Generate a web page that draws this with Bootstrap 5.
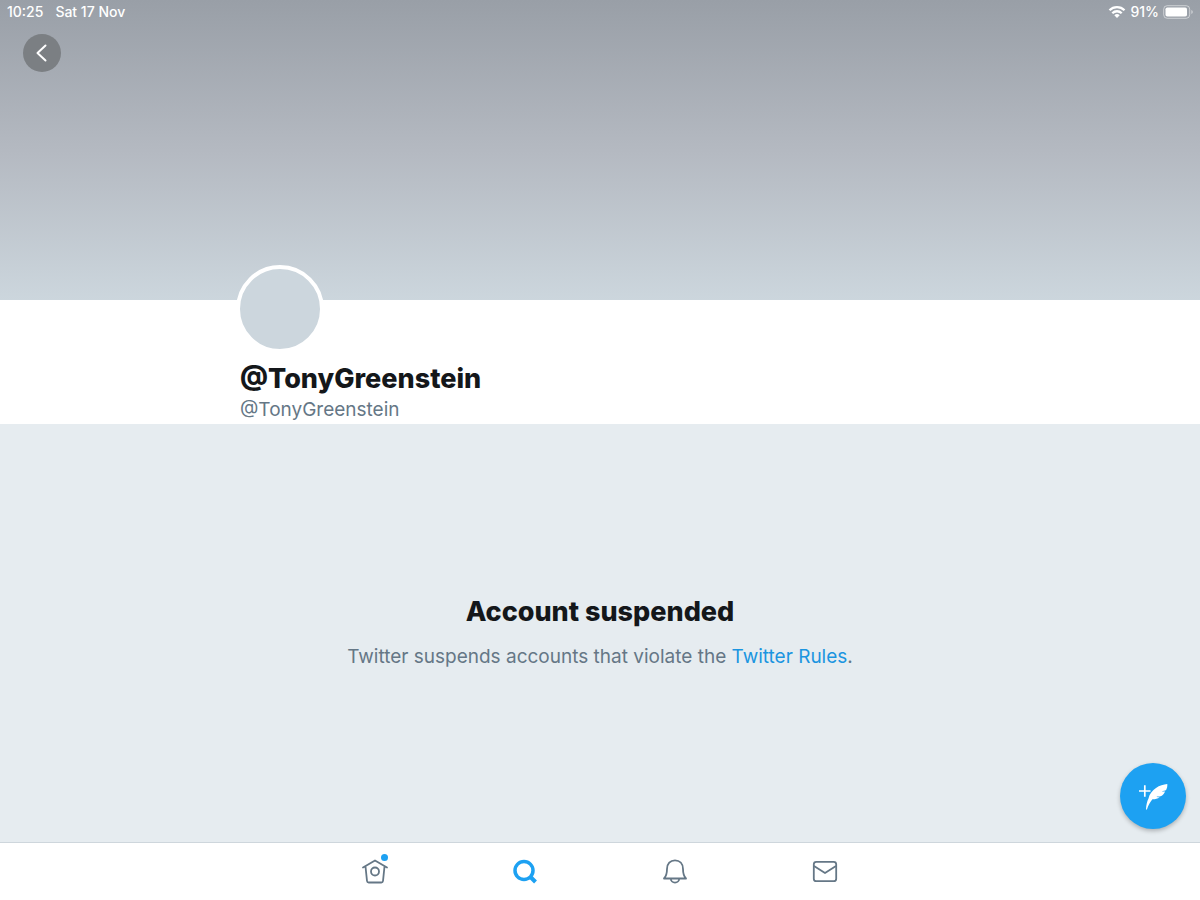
<!DOCTYPE html>
<html lang="en">
<head>
<meta charset="utf-8">
<meta name="viewport" content="width=device-width, initial-scale=1">
<title>@TonyGreenstein</title>
<link href="https://cdn.jsdelivr.net/npm/bootstrap@5.3.0/dist/css/bootstrap.min.css" rel="stylesheet">
<style>
  body { font-family: Inter, "Liberation Sans", sans-serif; color: #14171a; background: #e6ecf0; }
  .banner { height: 300px; background: linear-gradient(#999fa7, #b4b9c1 50%, #ccd6dd); }
  .status { font-size: 14px; line-height: 24px; font-weight: 500; padding: 0 7px; }
  .back { width: 38px; height: 38px; margin: 10px 0 0 23px; background: #7b7f83; }
  .profile { width: 60%; }
  .avatar { width: 88px; height: 88px; margin: -35px 0 0 -4px; border: 4px solid #fff; background: #ccd6dd; }
  .title { font-size: 27px; line-height: 34px; font-weight: 800; }
  .sub { font-size: 19px; line-height: 24px; color: #657786; }
  .profile .title { margin-top: 9px; }
  .profile .sub { margin-top: 2px; padding-bottom: 2px; }
  .sub a { color: #1b95e0; }
  .notice { padding-bottom: 2px; }
  .compose { width: 66px; height: 66px; right: 14px; bottom: 13px; background: #1da1f2; box-shadow: 0 2px 4px rgba(0,0,0,.25); }
  .tabs { height: 58px; border-top: 1px solid #ced6dc; }
  .tabs-inner { width: 50%; padding-bottom: 2px; }
  .tab { color: #657786; }
  .tab.active { color: #1da1f2; }
  svg { display: block; }
</style>
</head>
<body class="d-flex flex-column min-vh-100">
<header class="banner flex-shrink-0">
  <div class="status d-flex justify-content-between text-white">
    <div class="d-flex gap-2"><span class="me-1">10:25</span><span>Sat 17 Nov</span></div>
    <div class="d-flex align-items-center gap-1">
      <svg width="18" height="14" viewBox="0 0 18 14" fill="none" stroke="#fff" stroke-width="2.3"><path d="M1.5 5.2a10.7 10.7 0 0 1 15 0M4.3 8.2a6.7 6.7 0 0 1 9.400 0"/><path d="M9 13 6.300 10.300a3.900 3.900 0 0 1 5.400 0z" fill="#fff" stroke="none"/></svg>
      <span>91%</span>
      <svg width="30" height="14" viewBox="0 0 30 14"><rect x=".7" y=".7" width="26" height="12.600" rx="3.500" fill="none" stroke="#fff" stroke-opacity=".5"/><rect x="2.500" y="2.500" width="21.500" height="9" rx="1.800" fill="#fff"/><path d="M28.300 5v4q1.500-.5 1.500-2t-1.500-2z" fill="#fff" fill-opacity=".5"/></svg>
    </div>
  </div>
  <button type="button" class="back btn border-0 rounded-circle p-0 d-flex align-items-center justify-content-center" aria-label="Back">
    <svg width="38" height="38" viewBox="0 0 38 38" fill="none" stroke="#fff" stroke-width="2" stroke-linecap="round" stroke-linejoin="round"><path d="m22.500 11.500-8 7.500 8 7.500"/></svg>
  </button>
</header>
<section class="bg-white">
  <div class="profile mx-auto">
    <div class="avatar rounded-circle"></div>
    <h1 class="title mb-0">@TonyGreenstein</h1>
    <p class="sub mb-0">@TonyGreenstein</p>
  </div>
</section>
<main class="notice flex-grow-1 position-relative d-flex flex-column align-items-center justify-content-center text-center">
  <h2 class="title mb-3">Account suspended</h2>
  <p class="sub mb-0">Twitter suspends accounts that violate the <a href="#rules" class="text-decoration-none">Twitter Rules</a>.</p>
  <button type="button" class="compose btn border-0 rounded-circle p-0 position-absolute" aria-label="Compose">
    <svg width="66" height="66" viewBox="0 0 66 66"><path d="M19 28h11.500M24.800 22.200v11.600" stroke="#fff" stroke-width="1.700" fill="none"/><path d="M26 46.300C26.200 42 27 38.500 28.500 35.500 29.300 31 32.500 27.500 36 25c3.500-2.600 7.500-3.700 11.300-4 .2 2.200-.2 4.200-1.200 6-1.300.8-2.800 1.100-4.300 1.200 1.200.4 2.200.5 3.300.2-1 2-2.200 3.500-3.800 4.600-1.500.6-3.300.7-4.900.5 1 .7 2.200 1 3.300.8-2.300 1.600-4.800 2.100-7.300 2-2.300 2.800-4 5.900-5.400 10-.2.600-.9.600-1 0z" fill="#fff"/></svg>
  </button>
</main>
<nav class="tabs bg-white flex-shrink-0" aria-label="Main">
  <div class="tabs-inner mx-auto h-100 d-flex">
    <a href="#home" class="tab flex-fill d-flex align-items-center justify-content-center" aria-label="Home">
      <svg width="34" height="34" viewBox="0 0 34 34" fill="none" stroke="currentColor" stroke-width="1.800" stroke-linejoin="round" stroke-linecap="round"><path d="M5 13.500 17 6.500l12 7M7.500 12.500l1.500 14.500q.2 1.500 1.700 1.500h12.600q1.500 0 1.700-1.500l1.500-14.500"/><circle cx="17" cy="17.500" r="4"/><circle cx="26.500" cy="3.500" r="3.500" fill="#1da1f2" stroke="none"/></svg>
    </a>
    <a href="#search" class="tab active flex-fill d-flex align-items-center justify-content-center" aria-label="Search">
      <svg width="34" height="34" viewBox="0 0 34 34" fill="none" stroke="currentColor" stroke-width="3.500"><circle cx="16" cy="16.500" r="9"/><path d="m22.500 23 5 5" stroke-width="4"/></svg>
    </a>
    <a href="#notifications" class="tab flex-fill d-flex align-items-center justify-content-center" aria-label="Notifications">
      <svg width="34" height="34" viewBox="0 0 34 34" fill="none" stroke="currentColor" stroke-width="1.800" stroke-linejoin="round"><path d="M6 24.500c2.500-2.500 3-4.500 3-9.500 0-5.500 3.300-8.700 8-8.700s8 3.200 8 8.700c0 5 .5 7 3 9.500zM12.800 24.500a4.200 4.200 0 0 0 8.400 0"/></svg>
    </a>
    <a href="#messages" class="tab flex-fill d-flex align-items-center justify-content-center" aria-label="Messages">
      <svg width="34" height="34" viewBox="0 0 34 34" fill="none" stroke="currentColor" stroke-width="1.800" stroke-linejoin="round"><rect x="5.800" y="7.800" width="22.400" height="19.400" rx="2.500"/><path d="m6 12 11 7 11-7"/></svg>
    </a>
  </div>
</nav>
<script src="https://cdn.jsdelivr.net/npm/bootstrap@5.3.0/dist/js/bootstrap.bundle.min.js"></script>
</body>
</html>
